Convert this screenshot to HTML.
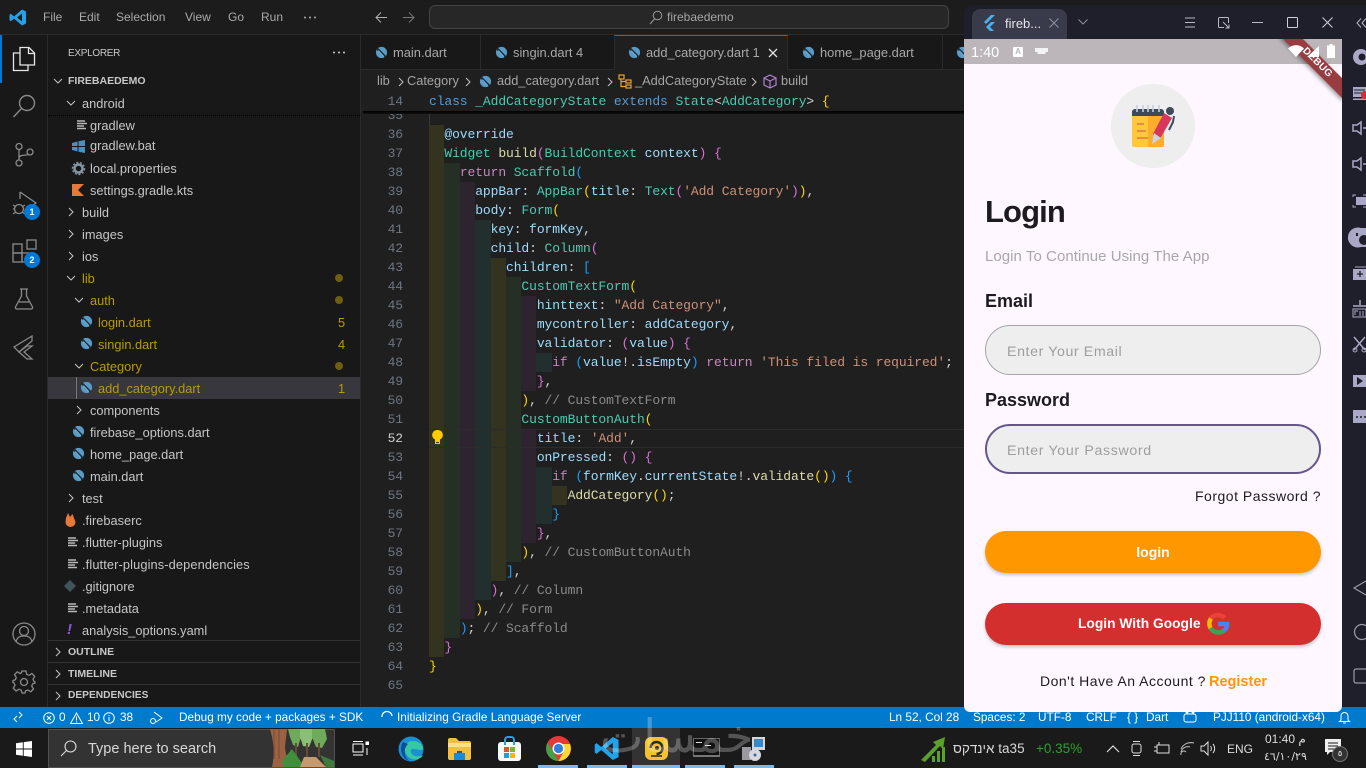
<!DOCTYPE html>
<html><head><meta charset="utf-8"><title>firebaedemo</title>
<style>
html,body{margin:0;padding:0;width:1366px;height:768px;overflow:hidden;background:#1f1f1f}
body{position:relative;font-family:"Liberation Sans",sans-serif;font-size:13px;color:#ccc}
.a{position:absolute;white-space:nowrap}
.b{position:absolute}
svg{position:absolute;overflow:visible}
.m{top:7px;line-height:20px;font-size:12px;color:#aaa}
.r{line-height:22px;height:22px;font-size:12.8px;color:#c6c6c6;margin-top:2px}
.y{color:#b89a10}
.h{font-weight:bold;font-size:10.5px;line-height:22px;color:#c8c8c8}
.tab{top:43px;line-height:20px;font-size:12.9px;color:#a8a8a8}
.bc{top:72px;line-height:18px;font-size:12.8px;color:#a5a5a5}
.l{position:absolute;left:429px;font-family:"Liberation Mono",monospace;font-size:13px;letter-spacing:-.1px;line-height:19px;height:19px;white-space:pre;color:#d4d4d4}
.n{position:absolute;left:370px;width:33px;text-align:right;font-family:"Liberation Mono",monospace;font-size:13px;letter-spacing:-.1px;line-height:19px;color:#6e7681}
.t{color:#4ec9b0}.f{color:#dcdcaa}.v{color:#9cdcfe}.k{color:#569cd6}.c{color:#c586c0}.s{color:#ce9178}.g{color:#8a8a8a}
.b1{color:#ffd700}.b2{color:#da70d6}.b3{color:#179fff}
.st{top:707px;line-height:21px;font-size:11.8px;color:#fff}
.i0{background:#33331f}.i1{background:#262f26}.i2{background:#2e2430}.i3{background:#21302f}
</style></head><body>
<svg width="0" height="0" style="position:absolute"><defs>
<symbol id="dart" viewBox="0 0 14 14"><circle cx="7" cy="7" r="6" fill="#5a9bc6"/><path d="M2 2.5L11.5 12" stroke="#1b2a35" stroke-width="2.4"/><path d="M3.5 5L9.5 11.5" stroke="#6db1dc" stroke-width="1.2"/></symbol>
<symbol id="lines" viewBox="0 0 12 12"><path d="M1 2h8M1 4.500h10M1 7h7M1 9.500h9" stroke="#b8b8b8" stroke-width="1.400"/></symbol>
<symbol id="cr" viewBox="0 0 10 10"><path d="M3 1l4 4-4 4" fill="none" stroke="#c5c5c5" stroke-width="1"/></symbol>
<symbol id="cd" viewBox="0 0 10 10"><path d="M1 3l4 4 4-4" fill="none" stroke="#c5c5c5" stroke-width="1"/></symbol>
</defs></svg>

<!-- title bar -->
<div class="b" style="left:0;top:0;width:1366px;height:35px;background:#1c1c1c;border-bottom:1px solid #2b2b2b;box-sizing:border-box"></div>
<svg style="left:9px;top:9px" width="18" height="17" viewBox="0 0 18 17"><path d="M13 0.500L17 2.500V14.500L13 16.500L5 9.500L1.800 12.200L0.500 11.300V5.700L1.800 4.800L5 7.500Z" fill="#23a2ea"/><path d="M13 4.500L8 8.500L13 12.500Z" fill="#1c1c1c"/></svg>
<span class="a m" style="left:43px">File</span><span class="a m" style="left:79px">Edit</span><span class="a m" style="left:116px">Selection</span><span class="a m" style="left:185px">View</span><span class="a m" style="left:228px">Go</span><span class="a m" style="left:261px">Run</span>
<svg style="left:303px;top:16px" width="14" height="3"><circle cx="2" cy="1.500" r="1" fill="#aaa"/><circle cx="7" cy="1.500" r="1" fill="#aaa"/><circle cx="12" cy="1.500" r="1" fill="#aaa"/></svg>
<svg style="left:375px;top:11px" width="13" height="13"><path d="M12 6.500H1M6 1.500l-5 5 5 5" fill="none" stroke="#b0b0b0" stroke-width="1"/></svg>
<svg style="left:402px;top:11px" width="13" height="13"><path d="M1 6.500H12M7 1.500l5 5-5 5" fill="none" stroke="#777" stroke-width="1"/></svg>
<div class="b" style="left:429px;top:5px;width:520px;height:24px;box-sizing:border-box;background:#272727;border:1px solid #444;border-radius:6px"></div>
<svg style="left:649px;top:10px" width="14" height="15"><circle cx="8.500" cy="5.500" r="4.300" fill="none" stroke="#999"/><path d="M5.500 9L1 14" stroke="#999"/></svg>
<span class="a" style="left:667px;top:8px;line-height:18px;font-size:12px;color:#a5a5a5">firebaedemo</span>

<!-- activity bar -->
<div class="b" style="left:0;top:35px;width:48px;height:672px;background:#181818;border-right:1px solid #2b2b2b;box-sizing:border-box"></div>
<div class="b" style="left:0;top:35px;width:2px;height:48px;background:#0078d4"></div>
<svg style="left:12px;top:46px" width="24" height="26" fill="none" stroke="#e6e6e6" stroke-width="1.300"><path d="M8 1.500h9l5.500 5.500V19H8Z"/><path d="M16.500 1.500V7.500h6"/><path d="M8 7H1.500V24.500H16V19"/></svg>
<svg style="left:12px;top:94px" width="24" height="26" fill="none" stroke="#8a8a8a" stroke-width="1.400"><circle cx="15" cy="9" r="7.500"/><path d="M9.500 14.500L1.500 23"/></svg>
<svg style="left:13px;top:142px" width="22" height="26" fill="none" stroke="#8a8a8a" stroke-width="1.300"><circle cx="6" cy="4.500" r="3"/><circle cx="6" cy="21" r="3"/><circle cx="17" cy="10" r="3"/><path d="M6 7.500V18M6 16c0-4 9-2 10-4"/></svg>
<svg style="left:12px;top:190px" width="26" height="28" fill="none" stroke="#8a8a8a" stroke-width="1.300"><path d="M8 2L24 13 15 19"/><path d="M8 2V9"/><circle cx="7" cy="19" r="4.500"/><path d="M1 15l3 2M1 19h2M1 24l3-2M13 15l-3 2M13 24l-3-2"/></svg>
<div class="b" style="left:24px;top:204px;width:16px;height:16px;border-radius:8px;background:#0078d4;color:#fff;font-size:9px;line-height:16px;text-align:center;font-weight:bold">1</div>
<svg style="left:12px;top:239px" width="26" height="26" fill="none" stroke="#8a8a8a" stroke-width="1.300"><rect x="1" y="5" width="9" height="9"/><rect x="1" y="14" width="9" height="9"/><rect x="10" y="14" width="9" height="9"/><rect x="15" y="1" width="9" height="9"/></svg>
<div class="b" style="left:24px;top:252px;width:16px;height:16px;border-radius:8px;background:#0078d4;color:#fff;font-size:9px;line-height:16px;text-align:center;font-weight:bold">2</div>
<svg style="left:14px;top:288px" width="20" height="22" fill="none" stroke="#8a8a8a" stroke-width="1.300"><path d="M6 1h8M7.500 1v7L1.500 19a1.500 1.500 0 0 0 1 2h15a1.500 1.500 0 0 0 1-2L12.500 8V1M5 14h10"/></svg>
<svg style="left:13px;top:335px" width="21" height="25" fill="none" stroke="#8a8a8a" stroke-width="1.300"><path d="M19 1L1 12 6 17 19 6Z"/><path d="M19 11H14L6 17 14 24H19L11 17Z"/></svg>
<svg style="left:12px;top:622px" width="24" height="24" fill="none" stroke="#8a8a8a" stroke-width="1.300"><circle cx="12" cy="12" r="11"/><circle cx="12" cy="9" r="4.500"/><path d="M4 20c1-5 4-6 8-6s7 1 8 6"/></svg>
<svg style="left:12px;top:670px" width="24" height="24" fill="none" stroke="#8a8a8a" stroke-width="1.300"><circle cx="12" cy="12" r="3.500"/><path d="M10 1h4l.7 3.300 2.300 1 2.900-1.800 2.800 2.800L21 9.200l1 2.300L23 12v1l-2.300.8-1 2.300 1.800 2.900-2.800 2.800-2.900-1.800-2.300 1L13 23h-3l-.7-2.800-2.300-1-2.900 1.800-2.800-2.800L3 15.200l-1-2.300L1 12.500v-2l2.300-.7 1-2.300L2.500 4.600l2.800-2.800L8.200 3.500l1-.5Z"/></svg>

<!-- sidebar -->
<div class="b" style="left:48px;top:35px;width:313px;height:672px;background:#181818;border-right:1px solid #2b2b2b;box-sizing:border-box"></div>
<span class="a" style="left:68px;top:44px;line-height:20px;font-size:10px;letter-spacing:-.3px;color:#c8c8c8">EXPLORER</span>
<svg style="left:332px;top:51px" width="14" height="3"><circle cx="2" cy="1.500" r="1" fill="#ccc"/><circle cx="7" cy="1.500" r="1" fill="#ccc"/><circle cx="12" cy="1.500" r="1" fill="#ccc"/></svg>
<svg style="left:53px;top:76px" width="10" height="10"><use href="#cd"/></svg>
<span class="a h" style="left:68px;top:70px">FIREBAEDEMO</span>
<div class="b" style="left:48px;top:115px;width:312px;height:1px;border-top:1px dotted #000"></div>
<svg style="left:66px;top:98px" width="10" height="10"><use href="#cd"/></svg><span class="a r" style="left:82px;top:91px">android</span>
<svg style="left:76px;top:119px" width="12" height="12"><use href="#lines"/></svg><span class="a r" style="left:90px;top:113px">gradlew</span>
<svg style="left:72px;top:140px" width="13" height="13"><path d="M0 3l5.500-1.500V6H0zM6.500 1.300L13 0V6H6.500zM0 7h5.500v4.500L0 10zM6.500 7H13v6l-6.500-1.300z" fill="#4d8fb8"/></svg><span class="a r" style="left:90px;top:133px">gradlew.bat</span>
<svg style="left:72px;top:162px" width="13" height="13"><circle cx="6.500" cy="6.500" r="4" fill="none" stroke="#8597a5" stroke-width="2.500"/><circle cx="6.500" cy="6.500" r="6" fill="none" stroke="#8597a5" stroke-width="1.400" stroke-dasharray="2 1.700"/></svg><span class="a r" style="left:90px;top:156px">local.properties</span>
<svg style="left:72px;top:184px" width="12" height="12"><path d="M0 0H12L6 6l6 6H0Z" fill="#e8783a"/></svg><span class="a r" style="left:90px;top:178px">settings.gradle.kts</span>
<svg style="left:66px;top:207px" width="10" height="10"><use href="#cr"/></svg><span class="a r" style="left:82px;top:200px">build</span>
<svg style="left:66px;top:229px" width="10" height="10"><use href="#cr"/></svg><span class="a r" style="left:82px;top:222px">images</span>
<svg style="left:66px;top:251px" width="10" height="10"><use href="#cr"/></svg><span class="a r" style="left:82px;top:244px">ios</span>
<svg style="left:66px;top:273px" width="10" height="10"><use href="#cd"/></svg><span class="a r y" style="left:82px;top:266px">lib</span>
<svg style="left:74px;top:295px" width="10" height="10"><use href="#cd"/></svg><span class="a r y" style="left:90px;top:288px">auth</span>
<svg style="left:80px;top:315px" width="13" height="13"><use href="#dart"/></svg><span class="a r y" style="left:98px;top:310px">login.dart</span>
<svg style="left:80px;top:337px" width="13" height="13"><use href="#dart"/></svg><span class="a r y" style="left:98px;top:332px">singin.dart</span>
<svg style="left:74px;top:361px" width="10" height="10"><use href="#cd"/></svg><span class="a r y" style="left:90px;top:354px">Category</span>
<div class="b" style="left:48px;top:377px;width:312px;height:22px;background:#37373d"></div>
<div class="b" style="left:76px;top:377px;width:1px;height:22px;background:#777"></div>
<svg style="left:80px;top:381px" width="13" height="13"><use href="#dart"/></svg><span class="a r y" style="left:98px;top:376px">add_category.dart</span>
<svg style="left:74px;top:405px" width="10" height="10"><use href="#cr"/></svg><span class="a r" style="left:90px;top:398px">components</span>
<svg style="left:72px;top:425px" width="13" height="13"><use href="#dart"/></svg><span class="a r" style="left:90px;top:420px">firebase_options.dart</span>
<svg style="left:72px;top:447px" width="13" height="13"><use href="#dart"/></svg><span class="a r" style="left:90px;top:442px">home_page.dart</span>
<svg style="left:72px;top:469px" width="13" height="13"><use href="#dart"/></svg><span class="a r" style="left:90px;top:464px">main.dart</span>
<svg style="left:66px;top:493px" width="10" height="10"><use href="#cr"/></svg><span class="a r" style="left:82px;top:486px">test</span>
<svg style="left:65px;top:513px" width="11" height="14"><path d="M1 5L3 0 5 4 7.500 1 10.500 9A5 5 0 0 1 .5 9Z" fill="#e8783a"/></svg><span class="a r" style="left:82px;top:508px">.firebaserc</span>
<svg style="left:67px;top:536px" width="12" height="12"><use href="#lines"/></svg><span class="a r" style="left:82px;top:530px">.flutter-plugins</span>
<svg style="left:67px;top:558px" width="12" height="12"><use href="#lines"/></svg><span class="a r" style="left:82px;top:552px;letter-spacing:.12px">.flutter-plugins-dependencies</span>
<svg style="left:64px;top:580px" width="12" height="12"><path d="M6 0l6 6-6 6-6-6Z" fill="#41535b"/></svg><span class="a r" style="left:82px;top:574px">.gitignore</span>
<svg style="left:67px;top:602px" width="12" height="12"><use href="#lines"/></svg><span class="a r" style="left:82px;top:596px">.metadata</span>
<span class="a" style="left:67px;top:621px;font-size:15px;font-style:italic;font-weight:bold;color:#8a5bd8;line-height:18px">!</span><span class="a r" style="left:82px;top:618px">analysis_options.yaml</span>
<span class="a r y" style="left:338px;top:310px">5</span><span class="a r y" style="left:338px;top:332px">4</span><span class="a r y" style="left:338px;top:376px">1</span>
<div class="b" style="left:335px;top:274px;width:8px;height:8px;border-radius:4px;background:#6e5f10"></div>
<div class="b" style="left:335px;top:296px;width:8px;height:8px;border-radius:4px;background:#6e5f10"></div>
<div class="b" style="left:335px;top:362px;width:8px;height:8px;border-radius:4px;background:#6e5f10"></div>
<div class="b" style="left:48px;top:640px;width:312px;height:1px;background:#333"></div>
<div class="b" style="left:48px;top:662px;width:312px;height:1px;background:#333"></div>
<div class="b" style="left:48px;top:684px;width:312px;height:1px;background:#333"></div>
<svg style="left:53px;top:647px" width="10" height="10"><use href="#cr"/></svg><span class="a h" style="left:68px;top:641px">OUTLINE</span>
<svg style="left:53px;top:669px" width="10" height="10"><use href="#cr"/></svg><span class="a h" style="left:68px;top:663px">TIMELINE</span>
<svg style="left:53px;top:691px" width="10" height="10"><use href="#cr"/></svg><span class="a h" style="left:68px;top:685px;font-size:10.2px">DEPENDENCIES</span>

<!-- tabs -->
<div class="b" style="left:361px;top:35px;width:603px;height:35px;background:#181818;border-bottom:1px solid #2b2b2b;box-sizing:border-box"></div>
<div class="b" style="left:480px;top:35px;width:1px;height:35px;background:#2b2b2b"></div>
<div class="b" style="left:614px;top:35px;width:174px;height:35px;background:#1f1f1f;border-top:1px solid #0078d4;border-left:1px solid #2b2b2b;border-right:1px solid #2b2b2b;box-sizing:border-box"></div>
<div class="b" style="left:942px;top:35px;width:1px;height:35px;background:#2b2b2b"></div>
<svg style="left:375px;top:46px" width="13" height="13"><use href="#dart"/></svg><span class="a tab" style="left:393px">main.dart</span>
<svg style="left:495px;top:46px" width="13" height="13"><use href="#dart"/></svg><span class="a tab y" style="left:513px">singin.dart 4</span>
<svg style="left:628px;top:46px" width="13" height="13"><use href="#dart"/></svg><span class="a tab y" style="left:646px">add_category.dart 1</span>
<svg style="left:768px;top:48px" width="10" height="10"><path d="M1 1l8 8M9 1l-8 8" stroke="#e0e0e0" stroke-width="1.300"/></svg>
<svg style="left:802px;top:46px" width="13" height="13"><use href="#dart"/></svg><span class="a tab" style="left:820px">home_page.dart</span>
<svg style="left:956px;top:46px" width="13" height="13"><use href="#dart"/></svg>

<!-- breadcrumb -->
<div class="b" style="left:361px;top:70px;width:603px;height:637px;background:#1f1f1f"></div>
<span class="a bc" style="left:377px">lib</span><svg style="left:396px;top:77px" width="10" height="10"><use href="#cr"/></svg>
<span class="a bc" style="left:407px">Category</span><svg style="left:463px;top:77px" width="10" height="10"><use href="#cr"/></svg>
<svg style="left:479px;top:75px" width="13" height="13"><use href="#dart"/></svg><span class="a bc" style="left:497px">add_category.dart</span><svg style="left:605px;top:77px" width="10" height="10"><use href="#cr"/></svg>
<svg style="left:618px;top:74px" width="15" height="15" fill="none" stroke="#e8a33a" stroke-width="1.200"><rect x="1" y="1" width="5" height="4"/><rect x="8" y="6" width="5" height="3"/><rect x="8" y="11" width="5" height="3"/><path d="M3 5v7.500h5M3 7.500h5"/></svg>
<span class="a bc" style="left:635px">_AddCategoryState</span><svg style="left:749px;top:77px" width="10" height="10"><use href="#cr"/></svg>
<svg style="left:763px;top:74px" width="14" height="15" fill="none" stroke="#b180d7" stroke-width="1.200"><path d="M7 1l6 3v7l-6 3-6-3V4ZM1 4l6 3 6-3M7 7v7"/></svg>
<span class="a bc" style="left:781px">build</span>

<!-- indent guides -->
<div class="b i0" style="left:429px;top:125px;width:15px;height:532px"></div>
<div class="b" style="left:429px;top:106px;width:1px;height:19px;background:#3a3a3a"></div>
<div class="b i1" style="left:444px;top:163px;width:16px;height:475px"></div>
<div class="b i2" style="left:460px;top:182px;width:15px;height:437px"></div>
<div class="b i3" style="left:475px;top:220px;width:16px;height:380px"></div>
<div class="b i0" style="left:491px;top:258px;width:15px;height:323px"></div>
<div class="b i1" style="left:506px;top:277px;width:15px;height:285px"></div>
<div class="b i2" style="left:521px;top:296px;width:15px;height:95px"></div>
<div class="b i2" style="left:521px;top:429px;width:15px;height:114px"></div>
<div class="b i3" style="left:536px;top:353px;width:16px;height:19px"></div>
<div class="b i3" style="left:536px;top:467px;width:16px;height:57px"></div>
<div class="b i0" style="left:552px;top:486px;width:15px;height:19px"></div>
<div class="b" style="left:429px;top:429px;width:535px;height:19px;box-sizing:border-box;border-top:1px solid #2c2c2c;border-bottom:1px solid #2c2c2c"></div>

<!-- sticky line -->
<div class="n" style="top:106px">35</div>
<div class="b" style="left:361px;top:92px;width:603px;height:19px;background:#1f1f1f"></div>
<div class="b" style="left:363px;top:111px;width:601px;height:3px;background:linear-gradient(#000,#111)"></div>
<div class="n" style="top:92px">14</div>
<div class="l" style="top:92px"><span class="k">class</span> <span class="t">_AddCategoryState</span> <span class="k">extends</span> <span class="t">State</span>&lt;<span class="t">AddCategory</span>&gt; <span class="b1">{</span></div>

<!-- code -->
<div class="n" style="top:125px">36</div><div class="l" style="top:125px">  <span class="v">@override</span></div>
<div class="n" style="top:144px">37</div><div class="l" style="top:144px">  <span class="t">Widget</span> <span class="f">build</span><span class="b2">(</span><span class="t">BuildContext</span> <span class="v">context</span><span class="b2">) {</span></div>
<div class="n" style="top:163px">38</div><div class="l" style="top:163px">    <span class="c">return</span> <span class="t">Scaffold</span><span class="b3">(</span></div>
<div class="n" style="top:182px">39</div><div class="l" style="top:182px">      <span class="v">appBar</span>: <span class="t">AppBar</span><span class="b1">(</span><span class="v">title</span>: <span class="t">Text</span><span class="b2">(</span><span class="s">'Add Category'</span><span class="b2">)</span><span class="b1">)</span>,</div>
<div class="n" style="top:201px">40</div><div class="l" style="top:201px">      <span class="v">body</span>: <span class="t">Form</span><span class="b1">(</span></div>
<div class="n" style="top:220px">41</div><div class="l" style="top:220px">        <span class="v">key</span>: <span class="v">formKey</span>,</div>
<div class="n" style="top:239px">42</div><div class="l" style="top:239px">        <span class="v">child</span>: <span class="t">Column</span><span class="b2">(</span></div>
<div class="n" style="top:258px">43</div><div class="l" style="top:258px">          <span class="v">children</span>: <span class="b3">[</span></div>
<div class="n" style="top:277px">44</div><div class="l" style="top:277px">            <span class="t">CustomTextForm</span><span class="b1">(</span></div>
<div class="n" style="top:296px">45</div><div class="l" style="top:296px">              <span class="v">hinttext</span>: <span class="s">"Add Category"</span>,</div>
<div class="n" style="top:315px">46</div><div class="l" style="top:315px">              <span class="v">mycontroller</span>: <span class="v">addCategory</span>,</div>
<div class="n" style="top:334px">47</div><div class="l" style="top:334px">              <span class="v">validator</span>: <span class="b2">(</span><span class="v">value</span><span class="b2">) {</span></div>
<div class="n" style="top:353px">48</div><div class="l" style="top:353px">                <span class="c">if</span> <span class="b3">(</span><span class="v">value</span>!.<span class="v">isEmpty</span><span class="b3">)</span> <span class="c">return</span> <span class="s">'This filed is required'</span>;</div>
<div class="n" style="top:372px">49</div><div class="l" style="top:372px">              <span class="b2">}</span>,</div>
<div class="n" style="top:391px">50</div><div class="l" style="top:391px">            <span class="b1">)</span>, <span class="g">// CustomTextForm</span></div>
<div class="n" style="top:410px">51</div><div class="l" style="top:410px">            <span class="t">CustomButtonAuth</span><span class="b1">(</span></div>
<div class="n" style="top:429px;color:#ccc">52</div><div class="l" style="top:429px">              <span class="v">title</span>: <span class="s">'Add'</span>,</div>
<div class="n" style="top:448px">53</div><div class="l" style="top:448px">              <span class="v">onPressed</span>: <span class="b2">() {</span></div>
<div class="n" style="top:467px">54</div><div class="l" style="top:467px">                <span class="c">if</span> <span class="b3">(</span><span class="v">formKey</span>.<span class="v">currentState</span>!.<span class="f">validate</span><span class="b1">()</span><span class="b3">) {</span></div>
<div class="n" style="top:486px">55</div><div class="l" style="top:486px">                  <span class="f">AddCategory</span><span class="b1">()</span>;</div>
<div class="n" style="top:505px">56</div><div class="l" style="top:505px">                <span class="b3">}</span></div>
<div class="n" style="top:524px">57</div><div class="l" style="top:524px">              <span class="b2">}</span>,</div>
<div class="n" style="top:543px">58</div><div class="l" style="top:543px">            <span class="b1">)</span>, <span class="g">// CustomButtonAuth</span></div>
<div class="n" style="top:562px">59</div><div class="l" style="top:562px">          <span class="b3">]</span>,</div>
<div class="n" style="top:581px">60</div><div class="l" style="top:581px">        <span class="b2">)</span>, <span class="g">// Column</span></div>
<div class="n" style="top:600px">61</div><div class="l" style="top:600px">      <span class="b1">)</span>, <span class="g">// Form</span></div>
<div class="n" style="top:619px">62</div><div class="l" style="top:619px">    <span class="b3">)</span>; <span class="g">// Scaffold</span></div>
<div class="n" style="top:638px">63</div><div class="l" style="top:638px">  <span class="b2">}</span></div>
<div class="n" style="top:657px">64</div><div class="l" style="top:657px"><span class="b1">}</span></div>
<div class="n" style="top:676px">65</div>
<svg style="left:432px;top:430px" width="11" height="14"><path d="M5.500 0A5 5 0 0 1 8 9.500V11H3V9.500A5 5 0 0 1 5.500 0Z" fill="#ffcc00"/><rect x="3.500" y="11.500" width="4" height="2" fill="none" stroke="#ffcc00"/></svg>

<!-- emulator -->
<div class="b" style="left:964px;top:5px;width:402px;height:707px;background:#1e1f2a;border-radius:8px 0 0 0"></div>
<div class="b" style="left:972px;top:9px;width:95px;height:30px;background:#393a4a;border-radius:8px 8px 0 0"></div>
<svg style="left:982px;top:15px" width="13" height="16"><path d="M9 0h4L4 9 2 7ZM9 7h4L8 12l4 4H8L4 12Z" fill="#45b1f0"/></svg>
<span class="a" style="left:1005px;top:14px;line-height:20px;font-size:13px;color:#e4e4ec">fireb...</span>
<svg style="left:1049px;top:18px" width="10" height="10"><path d="M.5.500l9 9M9.500.500l-9 9" stroke="#8f909c"/></svg>
<svg style="left:1078px;top:18px" width="10" height="8"><path d="M.5 1.500L5 6 9.500 1.500" fill="none" stroke="#8f909c"/></svg>
<svg style="left:1184px;top:17px" width="12" height="11"><path d="M1 1h10M1 5.500h10M1 10h10" stroke="#b8b9c4"/></svg>
<svg style="left:1218px;top:17px" width="12" height="12" fill="none" stroke="#b8b9c4"><path d="M6 10.500H1.500a1 1 0 0 1-1-1V1.500a1 1 0 0 1 1-1h8a1 1 0 0 1 1 1V6M5 5l6 6M11 7.500V11H7.500"/></svg>
<svg style="left:1252px;top:22px" width="11" height="2"><path d="M0 .5h11" stroke="#b8b9c4"/></svg>
<svg style="left:1287px;top:17px" width="11" height="11"><rect x=".5" y=".5" width="10" height="10" rx="1" fill="none" stroke="#d0d0da"/></svg>
<svg style="left:1322px;top:17px" width="11" height="11"><path d="M.5.500l10 10M10.500.500l-10 10" stroke="#d0d0da"/></svg>
<svg style="left:1356px;top:18px" width="10" height="10" fill="none" stroke="#b8b9c4"><path d="M5 .5L1 5l4 4.500M10 .5L6 5l4 4.500"/></svg>

<!-- phone -->
<div class="b" style="left:964px;top:39px;width:378px;height:673px;background:#fef7ff;overflow:hidden;border-radius:0 0 6px 6px">
  <div class="b" style="left:0;top:0;width:378px;height:25px;background:#bcb6ba"></div>
  <div class="b" style="left:309px;top:17px;width:88px;height:14px;background:#983c42;transform:rotate(45deg);box-shadow:0 2px 4px rgba(0,0,0,.4);color:#fff;font-size:10px;line-height:14px;font-weight:bold;text-align:center;letter-spacing:.3px">DEBUG</div>
  <span class="a" style="left:7px;top:4px;line-height:20px;font-size:14.500px;color:#fff">1:40</span>
  <div class="b" style="left:49px;top:8px;width:10px;height:10px;background:#fff;border-radius:1px;color:#bcb6ba;font-size:8px;line-height:10px;text-align:center;font-weight:bold">A</div>
  <svg style="left:71px;top:9px" width="13" height="8"><path d="M0 0h13v4H10.500v2h-8V4H0Z" fill="#fff" opacity=".85"/></svg>
  <svg style="left:324px;top:6px" width="16" height="12"><path d="M0 3.500C4.500-1 11.500-1 16 3.500L8 12Z" fill="#fff"/></svg>
  <svg style="left:343px;top:7px" width="12" height="11"><path d="M12 0V11H0Z" fill="#fff"/></svg>
  <svg style="left:363px;top:5px" width="8" height="14"><path d="M2.500 0h3v1.500H8V14H0V1.500h2.500Z" fill="#fff"/></svg>

  <div class="b" style="left:147px;top:45px;width:84px;height:84px;border-radius:42px;background:#eee"></div>
  <svg style="left:168px;top:65px" width="44" height="44" viewBox="0 0 44 44">
    <path d="M0 10h32v31a2 2 0 0 1-2 2H2a2 2 0 0 1-2-2Z" fill="#ffc93c"/><path d="M16 10h16v31a2 2 0 0 1-2 2H16Z" fill="#ffae2c"/>
    <path d="M0 8a3 3 0 0 1 3-3h26a3 3 0 0 1 3 3v4H0Z" fill="#3c4a5c"/><path d="M5 1v7M11 1v7M16 1v7M21 1v7M27 1v7" stroke="#c7cfe4" stroke-width="1.600"/>
    <path d="M5 20h7M5 27h9M5 34h11" stroke="#e0784a" stroke-width="1.600"/>
    <path d="M32 9l8 5-11 19-5 3-3-6Z" fill="#d9365c"/><path d="M22 29l7 5-9 6Z" fill="#c9d3e4"/><circle cx="38" cy="7" r="4" fill="#3c4a5c"/><path d="M42 12l-1 6-4 8" fill="none" stroke="#3c4a5c" stroke-width="2"/>
  </svg>
  <span class="a" style="left:21px;top:153px;line-height:40px;font-size:31px;font-weight:bold;letter-spacing:-.9px;color:#1d1b20">Login</span>
  <span class="a" style="left:21px;top:208px;line-height:20px;font-size:15px;letter-spacing:.05px;color:#a9a7aa">Login To Continue Using The App</span>
  <span class="a" style="left:21px;top:250px;line-height:24px;font-size:18px;font-weight:bold;color:#1d1b20">Email</span>
  <div class="b" style="left:21px;top:286px;width:336px;height:50px;box-sizing:border-box;border:1px solid #a5a3a8;border-radius:25px;background:#eee"></div>
  <span class="a" style="left:43px;top:303px;line-height:20px;font-size:14.200px;letter-spacing:.6px;color:#9e9e9e">Enter Your Email</span>
  <span class="a" style="left:21px;top:349px;line-height:24px;font-size:18px;font-weight:bold;color:#1d1b20">Password</span>
  <div class="b" style="left:21px;top:385px;width:336px;height:50px;box-sizing:border-box;border:2px solid #65558f;border-radius:25px;background:#eee"></div>
  <span class="a" style="left:43px;top:402px;line-height:20px;font-size:14.200px;letter-spacing:.65px;color:#9e9e9e">Enter Your Password</span>
  <span class="a" style="right:21px;top:447px;line-height:20px;font-size:14px;color:#1d1b20;letter-spacing:.5px">Forgot Password ?</span>
  <div class="b" style="left:21px;top:492px;width:336px;height:42px;border-radius:21px;background:#ff9800;box-shadow:0 2px 3px rgba(0,0,0,.22);color:#fff;font-size:14px;line-height:42px;text-align:center;font-weight:bold">login</div>
  <div class="b" style="left:21px;top:564px;width:336px;height:42px;border-radius:21px;background:#d32f2f;box-shadow:0 2px 3px rgba(0,0,0,.22)"></div>
  <span class="a" style="left:114px;top:575px;line-height:20px;font-size:13.800px;font-weight:bold;color:#fff">Login With Google</span>
  <svg style="left:243px;top:574px" width="22" height="22" viewBox="0 0 22 22" fill="none" stroke-width="4.500"><path d="M17.500 5A9 9 0 0 0 4 5" stroke="#ea4335"/><path d="M4 5.500A9 9 0 0 0 3.500 15" stroke="#fbbc05"/><path d="M3.500 15A9 9 0 0 0 17 17.500" stroke="#34a853"/><path d="M16.500 18A8 8 0 0 0 20 11H11" stroke="#4285f4"/></svg>
  <span class="a" style="left:76px;top:632px;line-height:20px;font-size:14px;letter-spacing:.5px;color:#1d1b20">Don't Have An Account ?</span>
  <span class="a" style="left:245px;top:633px;line-height:20px;font-size:14.500px;font-weight:bold;color:#ff9800">Register</span>
</div>

<!-- emulator right toolbar -->
<svg style="left:1352px;top:40px" width="14" height="400" fill="#a9a8c6">
  <circle cx="9" cy="17" r="8"/><circle cx="10" cy="17" r="3.500" fill="#1e1f2a"/>
  <rect x="1" y="47" width="13" height="10"/><path d="M2 50h11M2 53h11" stroke="#1e1f2a"/><rect x="1" y="58.500" width="13" height="1.500"/>
  <path d="M1 85h4l4-3v12l-4-3H1Z" fill="none" stroke="#a9a8c6" stroke-width="1.500"/><path d="M11 88h3" stroke="#a9a8c6" stroke-width="1.500"/>
  <path d="M1 121h4l4-3v12l-4-3H1Z" fill="none" stroke="#a9a8c6" stroke-width="1.500"/><path d="M11 124h3" stroke="#a9a8c6" stroke-width="1.500"/>
  <rect x="4" y="157" width="10" height="8"/><path d="M1 157v-2h3M1 165v2h3M14 155h-3M14 167h-3" fill="none" stroke="#a9a8c6"/>
  <path d="M9 188a10 10 0 1 0 0 19h5v-19Z"/><circle cx="12" cy="200" r="5" fill="#1e1f2a"/><path d="M5 193v3" stroke="#1e1f2a" stroke-width="2"/>
  <path d="M1 229h13v11H1Z"/><path d="M3 227h11" stroke="#a9a8c6"/><path d="M5 234h6M8 231v6" stroke="#1e1f2a" stroke-width="1.300"/>
  <rect x="1" y="269" width="13" height="8" fill="none" stroke="#a9a8c6"/><path d="M1 266h13M8 260v5" stroke="#a9a8c6" stroke-width="1.500"/><path d="M3 275v-4h3M8 271v5M11 271v5" stroke="#a9a8c6" fill="none"/>
  <path d="M2 297l11 13M13 297L2 310" stroke="#a9a8c6" stroke-width="1.500"/><circle cx="3" cy="310" r="2" fill="none" stroke="#a9a8c6"/><circle cx="12" cy="310" r="2" fill="none" stroke="#a9a8c6"/>
  <rect x="1" y="335" width="13" height="12"/><path d="M5 337l6 4-6 4Z" fill="#1e1f2a"/>
  <rect x="1" y="370" width="13" height="13"/><path d="M4 377h2M8 377h2M12 377h2" stroke="#1e1f2a" stroke-width="1.500"/>
</svg>
<div class="b" style="left:1361px;top:91px;width:7px;height:8px;border-radius:4px;background:#d32f2f"></div>
<svg style="left:1353px;top:578px" width="13" height="120" fill="none" stroke="#9a9aa6" stroke-width="1.200"><path d="M13 3L1 10l12 7"/><circle cx="9" cy="54" r="7.500"/><rect x="1" y="91" width="16" height="14" rx="2"/></svg>

<!-- status bar -->
<div class="b" style="left:0;top:707px;width:1366px;height:21px;background:#007acc"></div>
<div class="b" style="left:964px;top:700px;width:378px;height:12px;background:#fef7ff;border-radius:0 0 6px 6px"></div>
<svg style="left:12px;top:711px" width="12" height="12" fill="none" stroke="#fff"><path d="M7 1l3 3-3 3M5 5L2 8l3 3" /></svg>
<svg style="left:43px;top:712px" width="12" height="12" fill="none" stroke="#fff"><circle cx="6" cy="6" r="5.300"/><path d="M4 4l4 4M8 4L4 8"/></svg>
<span class="a st" style="left:59px">0</span>
<svg style="left:70px;top:712px" width="13" height="12" fill="none" stroke="#fff"><path d="M6.500 1L12.500 11.500H.5ZM6.500 4.500v4M6.500 9.500v1"/></svg>
<span class="a st" style="left:87px">10</span>
<svg style="left:103px;top:712px" width="12" height="12" fill="none" stroke="#fff"><circle cx="6" cy="6" r="5.300"/><path d="M6 5v4M6 3v1"/></svg>
<span class="a st" style="left:120px">38</span>
<svg style="left:149px;top:711px" width="14" height="14" fill="none" stroke="#fff"><path d="M5 1l8 6-6 4"/><circle cx="4" cy="10" r="2.500"/></svg>
<span class="a st" style="left:179px">Debug my code + packages + SDK</span>
<svg style="left:381px;top:711px" width="12" height="12" fill="none" stroke="#fff" stroke-width="1.300"><path d="M1 6A5 5 0 0 1 11 5"/></svg>
<span class="a st" style="left:397px">Initializing Gradle Language Server</span>
<span class="a st" style="left:889px">Ln 52, Col 28</span>
<span class="a st" style="left:973px">Spaces: 2</span>
<span class="a st" style="left:1038px">UTF-8</span>
<span class="a st" style="left:1086px">CRLF</span>
<span class="a st" style="left:1127px">{ }</span>
<span class="a st" style="left:1146px">Dart</span>
<svg style="left:1183px;top:710px" width="14" height="13"><rect x="1" y="4" width="12" height="8" rx="2" fill="none" stroke="#fff"/><circle cx="4" cy="2" r="1.500" fill="#fff"/><circle cx="10" cy="2" r="1.500" fill="#fff"/></svg>
<span class="a st" style="left:1213px">PJJ110 (android-x64)</span>
<svg style="left:1338px;top:711px" width="13" height="13" fill="none" stroke="#fff"><path d="M3 9V5a3.500 3.500 0 0 1 7 0v4l1.500 1.500h-10ZM5 12h3"/></svg>

<!-- taskbar -->
<div class="b" style="left:0;top:728px;width:1366px;height:40px;background:#1a1a1a"></div>
<svg style="left:16px;top:741px" width="16" height="16" fill="#fff"><path d="M0 2.200L6.800 1.200V7.500H0ZM7.700 1.100L16 0V7.500H7.700ZM0 8.500H6.800V14.800L0 13.800ZM7.700 8.500H16V16L7.700 14.900Z"/></svg>
<div class="b" style="left:48px;top:729px;width:287px;height:39px;background:#333;box-sizing:border-box;border:1px solid #505050"></div>
<svg style="left:60px;top:740px" width="17" height="17" fill="none" stroke="#ddd" stroke-width="1.100"><circle cx="10.500" cy="6.500" r="5.500"/><path d="M6.500 10.500L1 16"/></svg>
<span class="a" style="left:88px;top:739px;line-height:20px;font-size:14.500px;color:#d8d8d8">Type here to search</span>
<svg style="left:270px;top:729px" width="65" height="38" viewBox="0 0 65 38">
  <path d="M0 0H17L15 18Q16 32 24 38H2Q6 20 0 0Z" fill="#9a6242"/><path d="M4 0V30M9 0V30" stroke="#7a4a30"/>
  <path d="M18 0h12l1 8-3 10-5-2-3-8Z" fill="#6fa95a"/><path d="M30 0h12l1 8-4 10-6-1-3-9Z" fill="#8cbf76"/><path d="M42 0h13l2 10-5 9-6-1-4-10Z" fill="#6fa95a"/>
  <path d="M25 14h2v14h-2ZM36 14h2v14h-2ZM48 14h2v14h-2Z" fill="#6b4a35"/>
  <path d="M12 32l10-12 10 14v4H14Z" fill="#3f8f3c"/><path d="M34 28h12l10 10H30Z" fill="#c69a70"/><path d="M50 26l14 6v6H56Z" fill="#3f7a3a"/>
</svg>
<svg style="left:352px;top:740px" width="17" height="17" fill="none" stroke="#fff"><rect x="1" y="4" width="10" height="8"/><path d="M1 1.500h10M1 15h10"/><rect x="14" y="2" width="2.500" height="2.500" fill="#fff"/><path d="M15 8v7"/></svg>
<svg style="left:398px;top:736px" width="26" height="26" viewBox="0 0 26 26"><circle cx="13" cy="13" r="12.500" fill="#1b8fd6"/><path d="M25 13c0-5-5-8-10-8C9 5 6 10 7 15c1 5 6 10 13 8 3-1 5-3 5-4-3 2-9 2-11-1-2-2-2-5 1-5 4 0 10 2 10 0Z" fill="#36c9a4"/><path d="M5 6C1 12 3 22 11 25 6 20 5 13 10 8Z" fill="#0a4f9b"/></svg>
<svg style="left:448px;top:738px" width="23" height="22"><path d="M0 2a2 2 0 0 1 2-2h6l3 3h10a2 2 0 0 1 2 2v15a2 2 0 0 1-2 2H2a2 2 0 0 1-2-2Z" fill="#f0c040"/><rect x="0" y="5" width="23" height="4" fill="#ffe08a"/><path d="M6 15h11v7H6Z" fill="#1a8ad4"/><path d="M9 15v-2h5v2" fill="#0f5f9f"/></svg>
<svg style="left:498px;top:736px" width="23" height="25"><rect x="0" y="6" width="23" height="19" rx="3" fill="#fafafa"/><path d="M7 9V4a3 3 0 0 1 3-3h3a3 3 0 0 1 3 3v5" fill="none" stroke="#20a4e4" stroke-width="2"/><rect x="6" y="11" width="5" height="5" fill="#e84f2d"/><rect x="12" y="11" width="5" height="5" fill="#7cb82e"/><rect x="6" y="17" width="5" height="5" fill="#1ba1e2"/><rect x="12" y="17" width="5" height="5" fill="#fbb900"/></svg>
<svg style="left:546px;top:736px" width="25" height="25" viewBox="0 0 25 25"><circle cx="12.500" cy="12.500" r="12.500" fill="#e53935"/><path d="M1.700 6.500L7.500 16 12.500 25A12.500 12.500 0 0 1 1.700 6.500Z" fill="#43a047"/><path d="M12.500 8H24A12.500 12.500 0 0 1 12.500 25L18 15Z" fill="#fdd835"/><circle cx="12.500" cy="12.500" r="6" fill="#fff"/><circle cx="12.500" cy="12.500" r="4.600" fill="#2f7fdc"/></svg>
<svg style="left:594px;top:736px" width="26" height="25" viewBox="0 0 18 17"><path d="M13 0.500L17 2.500V14.500L13 16.500L5 9.500L1.800 12.200L0.500 11.300V5.700L1.800 4.800L5 7.500Z" fill="#23a2ea"/><path d="M13 4.500L8 8.500L13 12.500Z" fill="#1a1a1a"/></svg>
<div class="b" style="left:632px;top:728px;width:48px;height:40px;background:#333"></div>
<svg style="left:645px;top:737px" width="23" height="23"><rect width="23" height="23" rx="6" fill="#f5c12e"/><path d="M5.500 11a6 6 0 1 1 6 6" fill="none" stroke="#2a2a2a" stroke-width="2.500"/><circle cx="12" cy="11" r="2" fill="#2a2a2a"/><path d="M6 19h11" stroke="#2a2a2a" stroke-width="1.500"/></svg>
<svg style="left:693px;top:738px" width="27" height="19"><rect x=".5" y=".5" width="26" height="18" fill="#111" stroke="#666"/><path d="M3 4.500h6M12 7.500h6" stroke="#ddd"/><rect y="17" width="27" height="2" fill="#777"/></svg>
<svg style="left:742px;top:735px" width="24" height="27"><rect x="10" y="2" width="13" height="13" fill="#cfd8e0"/><rect x="12" y="4" width="9" height="8" fill="#2f8ad4"/><rect x="0" y="12" width="9" height="13" fill="#9a9aa0"/><circle cx="13" cy="20" r="6" fill="#d8d8e0"/><circle cx="13" cy="20" r="1.500" fill="#2f6fa0"/></svg>
<div class="b" style="left:538px;top:765px;width:40px;height:3px;background:#76b9ed"></div>
<div class="b" style="left:587px;top:765px;width:40px;height:3px;background:#76b9ed"></div>
<div class="b" style="left:632px;top:765px;width:48px;height:3px;background:#76b9ed"></div>
<div class="b" style="left:685px;top:765px;width:40px;height:3px;background:#76b9ed"></div>
<div class="b" style="left:734px;top:765px;width:40px;height:3px;background:#76b9ed"></div>
<span class="a" style="left:600px;top:696px;line-height:80px;font-size:46px;font-family:'DejaVu Sans',sans-serif;color:#fff;opacity:.25" dir="rtl">خمسات</span>

<svg style="left:920px;top:736px" width="26" height="27"><path d="M1 24L16 9 13 6 25 1 23 13 20 10 5 26Z" fill="#5aa02c"/><rect x="12" y="20" width="3" height="6" fill="#5aa02c"/><rect x="17" y="15" width="3" height="11" fill="#5aa02c"/><rect x="22" y="11" width="3" height="15" fill="#5aa02c"/></svg>
<span class="a" style="left:953px;top:739px;line-height:20px;font-size:13.500px;color:#d8d8d8;font-family:'Liberation Sans','DejaVu Sans',sans-serif" dir="ltr">אינדקס ta35</span>
<span class="a" style="left:1036px;top:739px;line-height:20px;font-size:13.500px;color:#2ca02c">+0.35%</span>
<svg style="left:1106px;top:744px" width="14" height="9"><path d="M1 8l6-6 6 6" fill="none" stroke="#ddd" stroke-width="1.200"/></svg>
<svg style="left:1131px;top:740px" width="11" height="17" fill="none" stroke="#ddd"><rect x="1" y="4" width="9" height="9" rx="2"/><path d="M2 1.500h7M2 15.500h7"/></svg>
<svg style="left:1153px;top:741px" width="17" height="15" fill="none" stroke="#ddd"><rect x="4" y="4" width="12" height="8"/><path d="M1 6h3M1 10h3M6 1v3"/></svg>
<svg style="left:1180px;top:741px" width="15" height="15" fill="none" stroke="#bbb"><path d="M1 8a11 11 0 0 1 13-6M1 11a7 7 0 0 1 9-5M1 14a3 3 0 0 1 5-3"/></svg>
<svg style="left:1200px;top:741px" width="16" height="15" fill="none" stroke="#ddd"><path d="M1 5h3l4-4v13l-4-4H1ZM10.500 5a4 4 0 0 1 0 5M13 3a7 7 0 0 1 0 9"/></svg>
<span class="a" style="left:1227px;top:739px;line-height:20px;font-size:12px;color:#ddd">ENG</span>
<span class="a" style="left:1265px;top:730px;line-height:18px;font-size:12px;color:#ddd;font-family:'Liberation Sans','DejaVu Sans',sans-serif">01:40 م</span>
<span class="a" style="left:1264px;top:748px;line-height:18px;font-size:11px;color:#ddd;font-family:'DejaVu Sans',sans-serif" dir="ltr">٤٦/١٠/٢٩</span>
<svg style="left:1325px;top:739px" width="18" height="18"><path d="M0 0h16v13H5l-3 3v-3H0Z" fill="#eee"/><path d="M3 4h10M3 7h10M3 10h7" stroke="#1a1a1a"/></svg>
<div class="b" style="left:1332px;top:746px;width:16px;height:16px;border-radius:8px;background:#333;border:1px solid #777;box-sizing:border-box;color:#fff;font-size:8px;line-height:14px;text-align:center;font-family:'DejaVu Sans',sans-serif">٥</div>
</body></html>
